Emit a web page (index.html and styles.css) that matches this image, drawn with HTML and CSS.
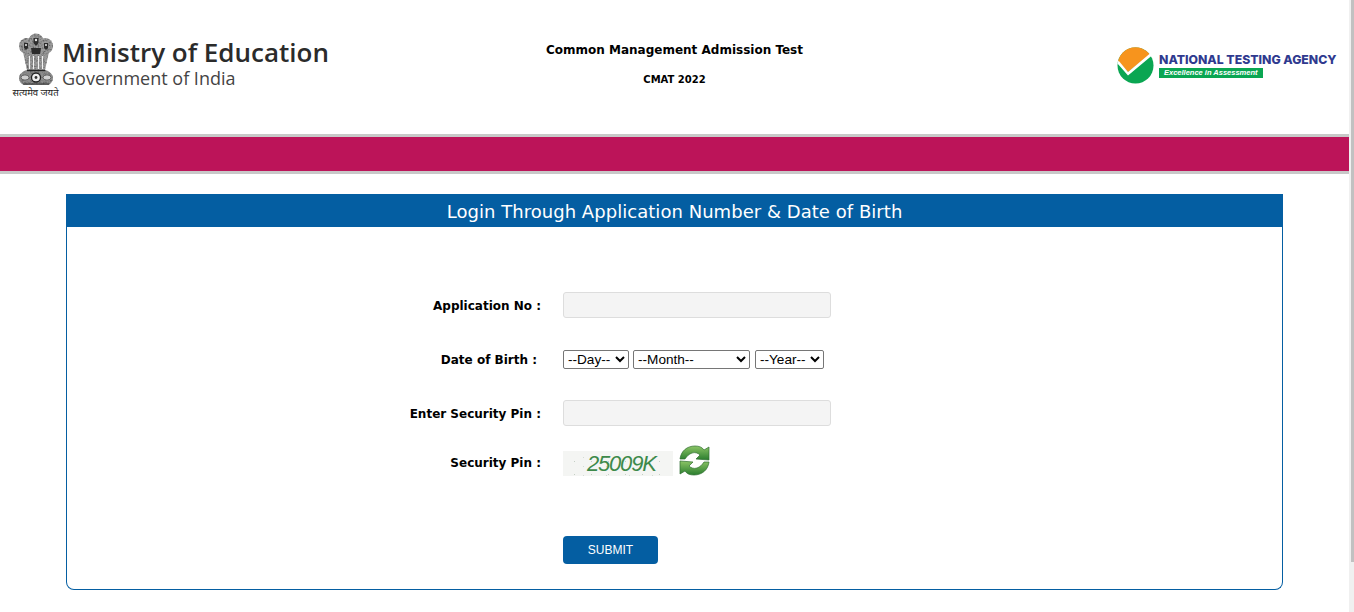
FILE: index.html
```html
<!DOCTYPE html>
<html lang="en">
<head>
<meta charset="utf-8">
<title>CMAT 2022</title>
<link rel="stylesheet" href="styles.css">
</head>
<body>
<div class="page">
  <header class="header">
    <div class="moe">
      <div class="emblem">
        <svg width="36" height="54" viewBox="0 0 36 54">
          <defs>
            <filter id="stone" x="0" y="0" width="100%" height="100%">
              <feTurbulence type="fractalNoise" baseFrequency=".55" numOctaves="2" seed="4" result="n"/>
              <feColorMatrix in="n" type="matrix" values="0 0 0 0 .13  0 0 0 0 .13  0 0 0 0 .13  3 0 0 0 -1.300" result="spots"/>
              <feComposite in="spots" in2="SourceAlpha" operator="in" result="clip"/>
              <feMerge><feMergeNode in="SourceGraphic"/><feMergeNode in="clip"/></feMerge>
            </filter>
          </defs>
          <g filter="url(#stone)">
            <g fill="#9a9a9a">
              <circle cx="9" cy="13" r="8"/>
              <circle cx="27" cy="13" r="8"/>
              <circle cx="18" cy="8" r="7.500"/>
              <path d="M5 19h26l-4 18H9z"/>
            </g>
            <path d="M9 37h18c4 1 8 4 8 8 0 3-2 6-5 7H6c-3-1-5-4-5-7 0-4 4-7 8-8z" fill="#8c8c8c"/>
          </g>
          <g fill="#2c2c2c">
            <path d="M15.500 5h5v5l-2.500 3-2.500-3zM6 10h4v5l-2 2-2-2zM26 10h4v5l-2 2-2-2z"/>
            <path d="M13 15h10l-1 6h-8z"/>
          </g>
          <g fill="#e8e8e8">
            <circle cx="18" cy="7" r="1.200"/>
            <circle cx="8" cy="12" r="1"/>
            <circle cx="28" cy="12" r="1"/>
          </g>
          <g stroke="#f2f2f2" stroke-width="1.100">
            <path d="M11.500 23v13M15.500 23v13M20.500 23v13M24.500 23v13"/>
          </g>
          <path d="M9 37.500h18" stroke="#222" stroke-width="1.300"/>
          <path d="M5 51h26" stroke="#333"/>
          <ellipse cx="7" cy="44.500" rx="4" ry="2.600" fill="#cfcfcf" stroke="#666"/>
          <ellipse cx="29" cy="44.500" rx="4" ry="2.600" fill="#cfcfcf" stroke="#666"/>
          <circle cx="18" cy="44.500" r="4.500" fill="#efefef" stroke="#222" stroke-width="1.300"/>
          <circle cx="18" cy="44.500" r="1.400" fill="#333"/>
        </svg>
        <span class="motto">सत्यमेव जयते</span>
      </div>
      <div class="moe-text">
        <div class="moe-title">Ministry of Education</div>
        <div class="moe-sub">Government of India</div>
      </div>
    </div>
    <div class="exam">
      <div class="exam-name">Common Management Admission Test</div>
      <div class="exam-code">CMAT 2022</div>
    </div>
    <div class="nta">
      <svg class="nta-mark" width="38" height="38" viewBox="0 0 38 38">
        <circle cx="18.500" cy="18.500" r="18" fill="#0aa652"/>
        <path d="M1 14A18 18 0 0 1 33 7.500L11 25z" fill="#f7941d"/>
        <path d="M.5 16.500L11 28.500L35 8.500L33 6.500L11 25L1.500 13.500z" fill="#fff"/>
      </svg>
      <div class="nta-text">
        <div class="nta-name">NATIONAL TESTING AGENCY</div>
        <div class="nta-tag">Excellence in Assessment</div>
      </div>
    </div>
  </header>
  <div class="band"></div>
  <main class="panel">
    <h1 class="panel-title">Login Through Application Number &amp; Date of Birth</h1>
    <form class="form">
      <div class="row row-app">
        <label class="label">Application No :</label>
        <input class="field" type="text">
      </div>
      <div class="row row-dob">
        <label class="label label-dob">Date of Birth :</label>
        <div class="selects">
          <select class="sel sel-day"><option>--Day--</option></select>
          <select class="sel sel-month"><option>--Month--</option></select>
          <select class="sel sel-year"><option>--Year--</option></select>
        </div>
      </div>
      <div class="row row-pin">
        <label class="label">Enter Security Pin :</label>
        <input class="field" type="text">
      </div>
      <div class="row row-captcha">
        <label class="label label-captcha">Security Pin :</label>
        <div class="captcha-wrap">
          <div class="captcha">25009K</div>
          <svg class="refresh" width="31" height="31" viewBox="0 0 31 31">
            <defs>
              <linearGradient id="g1" x1="0" y1="0" x2="0" y2="1"><stop offset="0" stop-color="#8cc566"/><stop offset="1" stop-color="#2a7d2e"/></linearGradient>
            </defs>
            <path d="M1 14C2 6 8 1 16 1c4 0 7 1 9 4l5-3v13l-13-1 4-4c-2-2-5-3-8-2-3 1-5 3-7 6z" fill="url(#g1)" stroke="#2f6f30" stroke-width=".7"/>
            <path d="M30 17c-1 8-7 13-15 13-4 0-7-1-9-4l-5 3V16l13 1-4 4c2 2 5 3 8 2 3-1 5-3 7-6z" fill="url(#g1)" stroke="#2f6f30" stroke-width=".7"/>
          </svg>
        </div>
      </div>
      <div class="row row-submit">
        <button class="submit" type="button">SUBMIT</button>
      </div>
    </form>
  </main>
</div>
<div class="scroll"><div class="thumb"></div></div>
</body>
</html>
```

FILE: styles.css
```css
* { box-sizing: border-box; }
html, body { margin: 0; height: 100%; overflow: hidden; background: #fff; }
body { font-family: "DejaVu Sans", Verdana, sans-serif; color: #000; }
.page { width: 1349px; }
.header { height: 134px; display: grid; grid-template-columns: 1fr auto 1fr; align-items: start; }
.moe { display: flex; padding: 33px 0 0 13px; }
.emblem { width: 45px; display: flex; flex-direction: column; align-items: center; }
.motto { font: 9.500px/9px "Noto Sans", "Liberation Sans", sans-serif; color: #222; white-space: nowrap; margin-top: 1px; }
.moe-text { margin-left: 4px; padding-top: 3px; font-family: "Open Sans", sans-serif; color: #2b2b2b; }
.moe-title { font-size: 26px; line-height: 33px; font-weight: 600; white-space: nowrap; }
.moe-sub { font-size: 18px; line-height: 18px; white-space: nowrap; color: #444; }
.exam { padding-top: 43px; text-align: center; font-weight: 700; }
.exam-name { font-size: 12px; line-height: 15px; }
.exam-code { font-size: 10px; line-height: 13px; margin-top: 15px; }
.nta { display: flex; justify-self: end; padding: 47px 13px 0 0; }
.nta-mark { flex: none; }
.nta-text { width: 177px; margin-left: 4px; padding-top: 5px; }
.nta-name { font: 800 12.250px/15px Inter, "Liberation Sans", sans-serif; color: #2f3a8f; white-space: nowrap; }
.nta-tag { width: 104px; height: 10px; margin-top: 1px; padding-left: 5px; background: #0aa652; color: #fff; font: italic 700 7.500px/10px "Liberation Sans", sans-serif; white-space: nowrap; }
.band { height: 40px; background: #bc1459; border-top: 3px solid #c8c8c8; border-bottom: 3px solid #c8c8c8; }
.panel { margin: 20px 66px 0; width: 1217px; height: 396px; border: 1px solid #045ea2; border-top: 0; border-radius: 0 0 8px 8px; }
.panel-title { margin: 0 -1px; height: 33px; background: #045ea2; color: #fff; font-size: 18px; font-weight: 400; letter-spacing: .04px; line-height: 35px; text-align: center; }
.row { display: flex; align-items: center; }
.label { width: 474px; flex: none; margin-right: 22px; padding-top: 2px; text-align: right; font-size: 12px; font-weight: 700; white-space: nowrap; }
.label-dob { padding: 0 4px 0 0; }
.label-captcha { padding-top: 4px; }
.row-app { margin-top: 65px; height: 26px; }
.row-dob { margin-top: 32px; height: 19px; }
.row-pin { margin-top: 31px; height: 26px; }
.row-captcha { margin-top: 19px; height: 32px; }
.row-submit { margin-top: 59px; padding-left: 496px; }
.field { width: 268px; height: 26px; background: #f4f4f4; border: 1px solid #ddd; border-radius: 3px; padding: 0; }
.selects { display: flex; gap: 4px; }
.sel { font: 13.600px "Liberation Sans", Arial, sans-serif; height: 19px; background: #fff; color: #000; border: 1px solid #767676; border-radius: 2px; padding: 0; }
.sel-day { width: 66px; }
.sel-month { width: 117px; }
.sel-year { width: 69px; margin-left: 1px; }
.captcha-wrap { display: flex; align-items: flex-start; }
.captcha {
  width: 110px; height: 25px; margin-top: 5px; padding-left: 24px;
  background-color: #f4f5f3;
  background-image: radial-gradient(circle, #c4cfc4 0, #c4cfc4 .7px, transparent 1px), radial-gradient(circle, #d4dcd4 0, #d4dcd4 .6px, transparent 1px);
  background-size: 17px 13px, 23px 9px;
  background-position: 3px 4px, 9px 2px;
  color: #3d8a4a; font: italic 22px/25px "Liberation Sans", sans-serif; letter-spacing: -1.200px;
}
.refresh { margin-left: 6px; margin-top: -1px; }
.submit { width: 95px; height: 28px; background: #045ea2; color: #fff; border: 0; border-radius: 4px; font: 12px "Liberation Sans", Arial, sans-serif; padding: 0; }
.scroll { position: absolute; top: 0; right: 0; width: 5px; height: 612px; background: #f0f0f0; }
.thumb { margin-left: 2px; width: 3px; height: 562px; background: #c1c1c1; }
```
